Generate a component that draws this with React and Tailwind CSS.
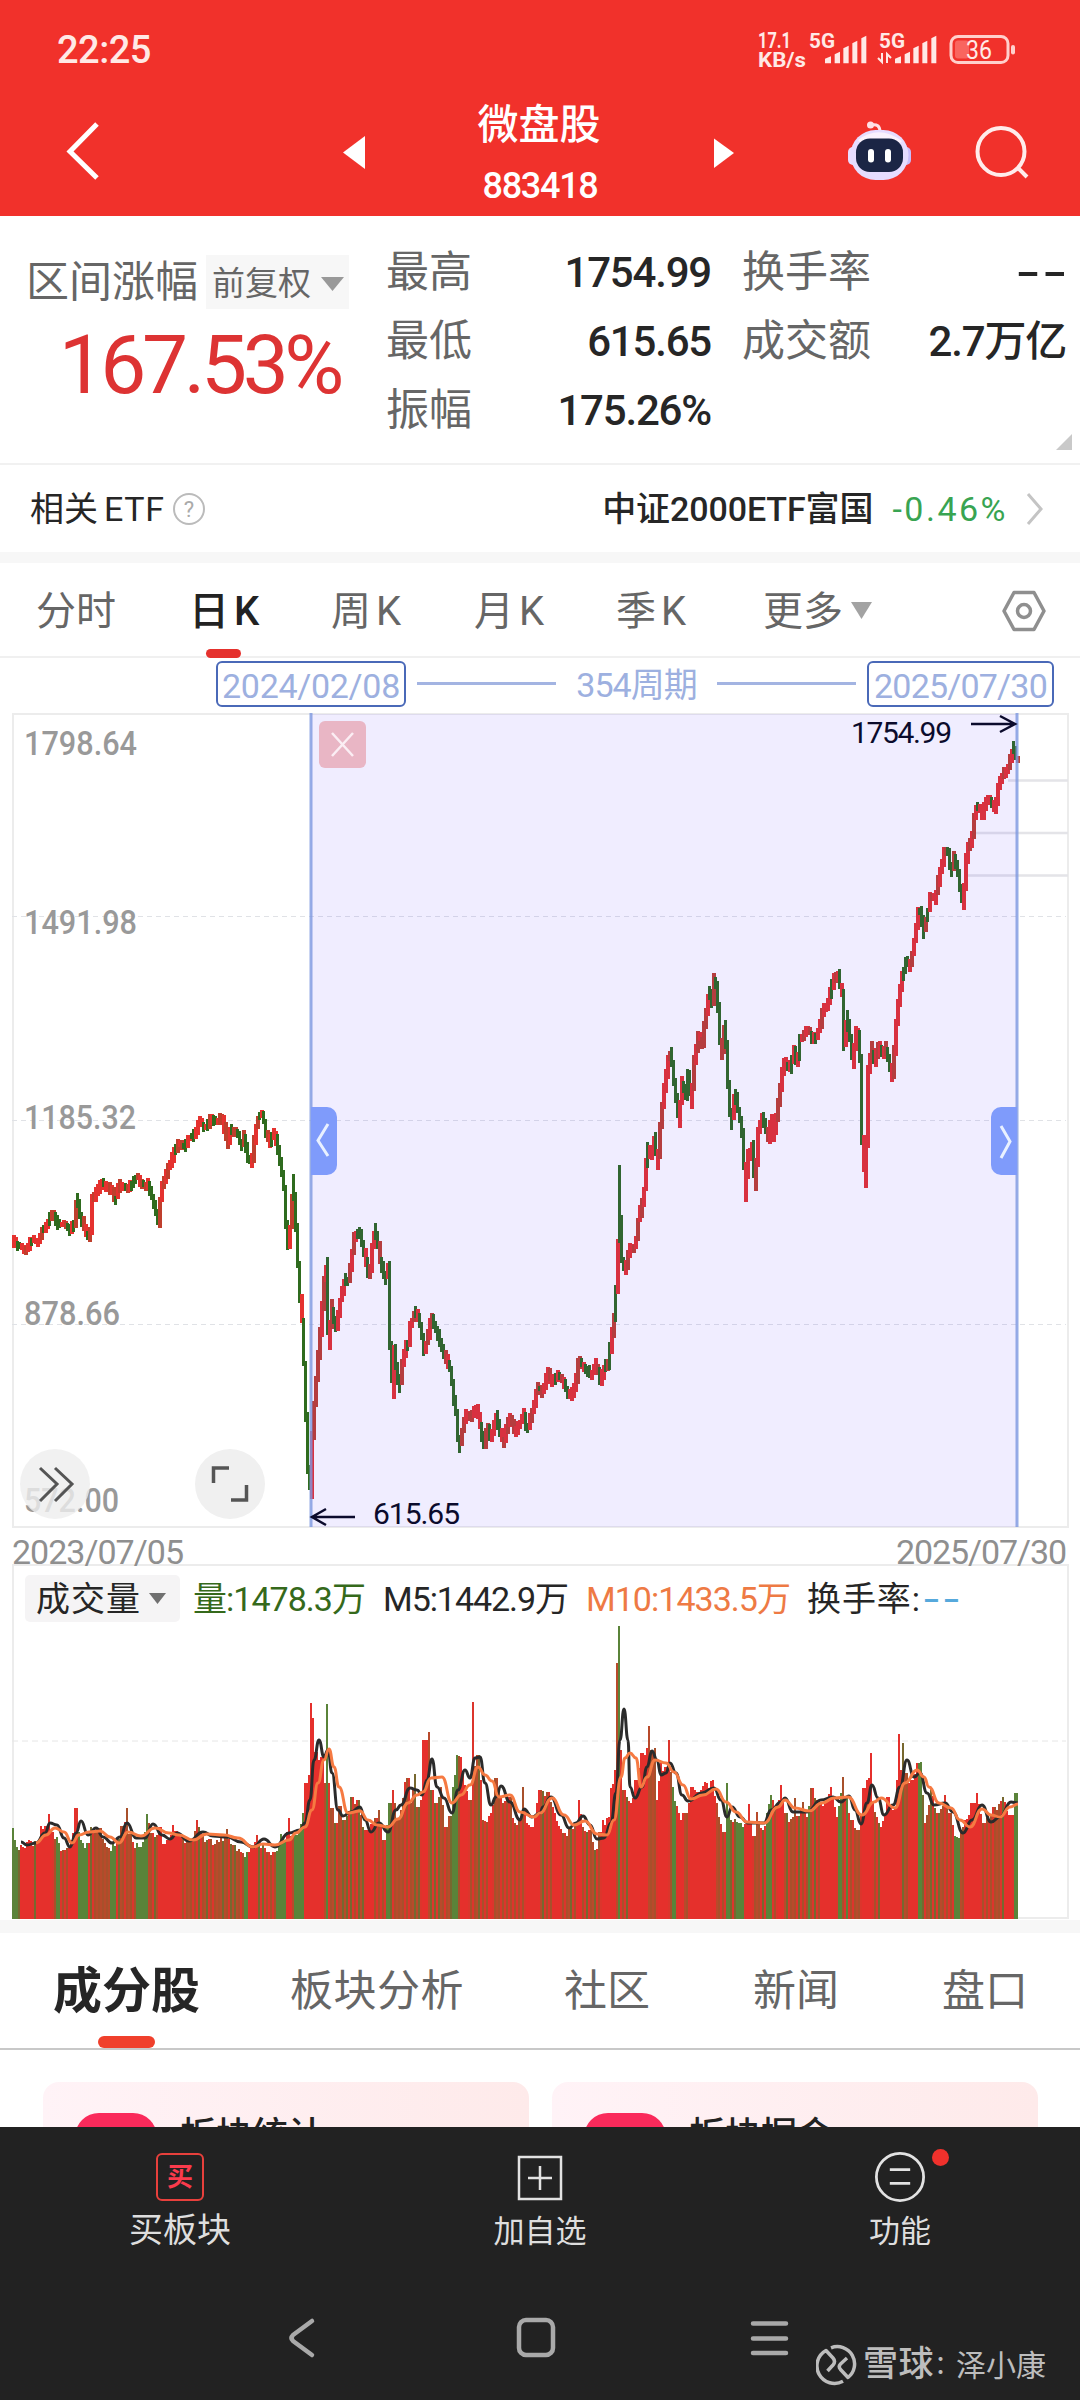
// src/App.jsx
import clsx from 'clsx';

const RED = '#e5322f';
const RUST = '#bf3f2d';
const GREEN = '#2f6b1e';

// k-line trace: x, y pairs in page pixels
const PRICE = [
  12, 1240, 19, 1246, 26, 1249, 33, 1239, 38, 1242, 41, 1232, 46, 1223, 53, 1214, 58, 1225, 65, 1223, 69, 1229, 74, 1222,
  76.5, 1198, 81, 1218, 87, 1238, 90, 1232, 92, 1199, 96, 1193, 100, 1182, 105, 1185, 112, 1190, 115, 1201, 119, 1184,
  126, 1186, 131, 1187, 137, 1175, 142, 1184, 148, 1184, 153, 1200, 158, 1223, 161, 1187, 167, 1171, 172, 1157, 179, 1143,
  185, 1147, 188, 1137, 195, 1134, 198, 1122, 207, 1127, 211, 1117, 215, 1122, 222, 1117, 227, 1143, 231, 1128, 238, 1133,
  241, 1147, 244, 1135, 247, 1153, 251, 1164, 257, 1118, 263, 1114, 266, 1133, 270, 1143, 274, 1132, 277, 1143, 281, 1166,
  284, 1187, 286, 1223, 287.5, 1248, 291, 1217, 293, 1178, 295, 1210, 297, 1243, 299, 1285, 302, 1320, 305, 1383,
  306, 1417, 307.5, 1467, 311, 1496, 312, 1433, 315, 1390, 318.5, 1350, 321, 1317, 324, 1280, 327, 1260, 327.5, 1326,
  329, 1343, 331, 1305, 336, 1327, 339, 1305, 344, 1280, 349, 1277, 351, 1257, 354, 1237, 359, 1229, 363, 1247, 367, 1268,
  369, 1276, 372, 1247, 375, 1227, 380, 1258, 385, 1279, 388, 1267, 389, 1337, 391, 1350, 392.5, 1392, 394, 1350,
  399, 1388, 401, 1370, 405, 1347, 408, 1343, 410, 1325, 415, 1311, 418, 1317, 421, 1330, 424, 1350, 429, 1330, 431.5, 1316,
  437, 1332, 442.5, 1349, 451, 1370, 453, 1393, 456, 1413, 459, 1450, 461, 1437, 465, 1412, 470, 1417, 475, 1406, 479, 1420,
  484, 1446, 487, 1426, 491, 1437, 496, 1416, 503, 1442, 509, 1418, 516, 1432, 523, 1413, 527, 1429, 534, 1402, 537, 1386,
  542, 1391, 548, 1372, 553, 1383, 558, 1374, 563, 1380, 569, 1397, 575, 1387, 578, 1361, 585, 1366, 591, 1375, 595, 1363,
  601, 1382, 603, 1367, 608, 1363, 611, 1340, 613, 1323, 615, 1310, 617, 1267, 618, 1240, 619, 1169, 620.7, 1257, 625, 1269,
  630, 1247, 635, 1247, 638, 1220, 643, 1197, 645, 1180, 647, 1147, 651, 1157, 655, 1134, 657, 1166, 660, 1126, 663, 1094,
  668, 1059, 670, 1052, 673, 1071, 679, 1122, 681, 1080, 687, 1096, 688, 1073, 691, 1103, 693, 1067, 698, 1035, 702, 1042,
  706, 1010, 709, 990, 712, 1002, 713, 977, 717, 986, 719, 1027, 721, 1055, 725, 1023, 727, 1067, 728, 1084, 731, 1124,
  735, 1091, 739, 1114, 743, 1137, 745, 1196, 747, 1157, 752, 1145, 755, 1189, 757, 1133, 762, 1114, 768, 1138, 771, 1117,
  773, 1136, 777, 1112, 780, 1088, 783, 1061, 791, 1067, 793, 1047, 797, 1063, 800, 1039, 808, 1028, 813, 1040, 818, 1031,
  823, 1010, 828, 1001, 833, 979, 838, 974, 842, 994, 844, 1044, 847, 1016, 850, 1038, 853, 1062, 855, 1030, 859, 1037,
  861, 1079, 862, 1139, 865, 1183, 867, 1100, 868, 1070, 871, 1047, 875, 1064, 877, 1044, 882, 1055, 885, 1046, 892, 1076,
  894, 1051, 895, 1035, 897, 1010, 899, 994, 902, 976, 906, 961, 909, 967, 912, 953, 915, 933, 918, 911, 921, 908, 923, 932,
  927, 916, 930, 897, 935, 899, 938, 880, 942, 863, 944, 852, 948, 852, 951, 873, 954, 856, 958, 871, 963, 907, 965, 863,
  968, 847, 972, 835, 973, 822, 977, 804, 982, 816, 985, 799, 992, 802, 995, 809, 998, 788, 1003, 773, 1007, 771, 1013, 746,
  1017, 761,
];

const VOLUME = [
  12, 1828, 15, 1840, 21, 1845, 29, 1840, 38, 1842, 41, 1826, 46, 1826, 49, 1814, 52, 1832, 57, 1837, 64, 1850, 71, 1840,
  76, 1808, 79, 1832, 83, 1843, 88, 1843, 90, 1827, 100, 1828, 107, 1847, 117, 1840, 122, 1826, 127, 1808, 130, 1834,
  133, 1842, 143, 1842, 147, 1814, 152, 1833, 160, 1827, 165, 1844, 173, 1825, 183, 1837, 191, 1842, 197, 1820, 203, 1836,
  217, 1840, 225, 1836, 227, 1829, 234, 1845, 248, 1852, 257, 1835, 263, 1845, 274, 1852, 281, 1834, 284, 1842, 289, 1818,
  292, 1836, 296, 1835, 303, 1813, 306, 1783, 309, 1775, 311, 1703, 313, 1718, 316, 1752, 318, 1760, 322, 1757, 325, 1783,
  327, 1704, 329, 1783, 332, 1808, 336, 1823, 340, 1806, 344, 1820, 352, 1797, 358, 1800, 365, 1830, 372, 1824, 379, 1810,
  384, 1840, 389, 1803, 393, 1790, 398, 1820, 405, 1782, 408, 1778, 410, 1803, 415, 1774, 418, 1807, 421, 1800, 424, 1740,
  429, 1732, 432, 1790, 436, 1803, 441, 1787, 446, 1827, 450, 1816, 453, 1787, 457, 1755, 461, 1757, 465, 1785, 470, 1800,
  473, 1702, 475, 1766, 478, 1755, 480, 1780, 483, 1820, 491, 1813, 496, 1778, 501, 1797, 510, 1797, 515, 1823, 520, 1820,
  523, 1787, 527, 1823, 532, 1827, 537, 1803, 540, 1790, 549, 1792, 555, 1813, 564, 1833, 571, 1827, 576, 1822, 579, 1800,
  583, 1827, 590, 1830, 595, 1850, 600, 1832, 603, 1820, 609, 1817, 611, 1788, 615, 1770, 617, 1663, 619, 1626, 621, 1750,
  624, 1790, 631, 1803, 636, 1780, 642, 1753, 647, 1748, 649, 1726, 651, 1750, 655, 1748, 657, 1800, 661, 1762, 666, 1767,
  669, 1740, 671, 1772, 673, 1787, 679, 1813, 686, 1813, 692, 1787, 698, 1792, 705, 1782, 713, 1780, 717, 1803, 724, 1832,
  727, 1783, 729, 1812, 740, 1823, 746, 1824, 749, 1804, 754, 1836, 757, 1812, 763, 1830, 771, 1795, 776, 1807, 781, 1785,
  786, 1813, 793, 1817, 795, 1798, 798, 1816, 803, 1802, 807, 1817, 812, 1788, 821, 1803, 831, 1787, 837, 1817, 843, 1777,
  846, 1797, 852, 1820, 858, 1830, 864, 1788, 867, 1780, 869, 1778, 871, 1753, 873, 1803, 881, 1827, 888, 1797, 895, 1807,
  897, 1780, 899, 1734, 901, 1770, 903, 1743, 906, 1773, 912, 1780, 917, 1763, 921, 1762, 925, 1823, 931, 1787, 938, 1813,
  945, 1795, 950, 1813, 957, 1837, 965, 1820, 972, 1803, 977, 1793, 984, 1823, 994, 1807, 1003, 1797, 1012, 1815, 1016, 1793,
];

const M5 = [
  21, 1842, 27, 1845, 36, 1843, 45, 1833, 50, 1823, 57, 1825, 64, 1838, 70, 1847, 76, 1833, 81, 1821, 88, 1835, 96, 1828,
  103, 1837, 112, 1843, 120, 1837, 127, 1823, 136, 1838, 145, 1838, 153, 1824, 162, 1835, 170, 1839, 177, 1833, 189, 1841,
  203, 1832, 213, 1836, 227, 1837, 241, 1842, 253, 1847, 264, 1839, 275, 1847, 289, 1833, 300, 1830, 305, 1823, 310, 1800,
  314, 1760, 319, 1740, 324, 1757, 328, 1750, 332, 1773, 338, 1810, 343, 1816, 351, 1812, 360, 1807, 365, 1820, 371, 1832,
  379, 1823, 388, 1832, 396, 1810, 401, 1805, 410, 1788, 417, 1790, 422, 1795, 427, 1780, 432, 1759, 437, 1787, 444, 1798,
  452, 1813, 458, 1790, 465, 1770, 470, 1778, 475, 1758, 480, 1757, 485, 1783, 491, 1805, 496, 1797, 501, 1786, 510, 1802,
  520, 1820, 524, 1809, 532, 1817, 540, 1813, 543, 1807, 551, 1797, 561, 1815, 569, 1828, 576, 1823, 583, 1816, 590, 1825,
  597, 1839, 604, 1838, 611, 1823, 616, 1793, 620, 1740, 624, 1709, 628, 1740, 630, 1787, 635, 1798, 642, 1787, 647, 1767,
  652, 1751, 657, 1760, 661, 1775, 666, 1773, 670, 1763, 676, 1773, 682, 1795, 688, 1801, 702, 1793, 714, 1788, 721, 1800,
  727, 1817, 732, 1807, 740, 1817, 748, 1823, 764, 1823, 771, 1810, 781, 1802, 785, 1798, 793, 1812, 807, 1812, 821, 1800,
  833, 1797, 841, 1802, 849, 1796, 855, 1810, 861, 1824, 867, 1803, 872, 1785, 878, 1798, 884, 1815, 893, 1805, 900, 1787,
  907, 1760, 914, 1777, 920, 1773, 927, 1793, 934, 1805, 945, 1803, 953, 1812, 963, 1833, 972, 1820, 982, 1805, 991, 1822,
  1000, 1817, 1011, 1802, 1018, 1803,
];

const M10 = [
  36, 1843, 46, 1835, 55, 1828, 64, 1832, 72, 1843, 79, 1835, 89, 1832, 100, 1831, 110, 1837, 119, 1843, 128, 1832,
  141, 1836, 155, 1828, 169, 1833, 179, 1835, 193, 1840, 207, 1834, 224, 1835, 238, 1838, 253, 1847, 263, 1844, 275, 1845,
  289, 1840, 296, 1833, 305, 1827, 312, 1810, 318, 1783, 324, 1760, 329, 1749, 334, 1767, 339, 1787, 348, 1813, 360, 1811,
  368, 1820, 377, 1825, 388, 1827, 398, 1819, 408, 1803, 417, 1795, 423, 1792, 431, 1778, 442, 1777, 452, 1803, 461, 1795,
  470, 1785, 478, 1767, 485, 1775, 492, 1781, 499, 1797, 510, 1795, 520, 1812, 534, 1817, 540, 1813, 552, 1798, 564, 1815,
  574, 1825, 585, 1821, 597, 1834, 607, 1835, 614, 1820, 621, 1777, 625, 1758, 630, 1753, 636, 1758, 641, 1787, 647, 1777,
  655, 1760, 666, 1763, 674, 1772, 683, 1785, 691, 1799, 703, 1795, 716, 1789, 726, 1802, 736, 1812, 747, 1822, 764, 1823,
  778, 1807, 785, 1800, 795, 1808, 809, 1811, 822, 1803, 834, 1798, 848, 1797, 862, 1815, 874, 1802, 881, 1798, 895, 1808,
  905, 1783, 917, 1770, 924, 1777, 929, 1787, 939, 1803, 951, 1808, 960, 1820, 970, 1827, 982, 1809, 991, 1815, 1000, 1817,
  1010, 1807, 1018, 1804,
];

// runs where the volume colour does not alternate
const GREEN_RUNS = [[12, 18], [56, 60], [78, 88], [110, 116], [136, 148], [245, 249], [277, 287], [294, 304], [387, 391], [452, 459], [672, 677], [727, 731], [737, 744], [767, 772], [808, 811], [839, 843], [846, 849], [919, 923], [954, 961], [1015, 1018]];
const RED_RUNS = [[21, 33], [37, 52], [69, 77], [158, 180], [249, 256], [287, 292], [305, 325], [366, 375], [423, 429], [460, 469], [489, 493], [527, 540], [552, 560], [577, 583], [602, 616], [630, 648], [658, 668], [679, 685], [690, 716], [746, 752], [778, 785], [820, 836], [862, 872], [880, 900], [911, 918], [965, 980], [1004, 1012]];

const rnd = n => {
  const v = Math.sin(n * 127.1 + 11.7) * 43758.5453;
  return v - Math.floor(v);
};

const toPairs = flat => {
  const out = [];
  for (let i = 0; i < flat.length; i += 2) out.push([flat[i], flat[i + 1]]);
  return out;
};

const at = (pts, x) => {
  for (let i = 1; i < pts.length; i++) {
    if (x <= pts[i][0]) {
      const [x0, y0] = pts[i - 1];
      const [x1, y1] = pts[i];
      return y0 + ((x - x0) / (x1 - x0)) * (y1 - y0);
    }
  }
  return pts[pts.length - 1][1];
};

const inRuns = (runs, x) => runs.some(([a, b]) => x >= a && x < b);

const smooth = flat => {
  const p = toPairs(flat);
  let d = `M${p[0][0]} ${p[0][1]}`;
  for (let i = 1; i < p.length; i++) {
    const mx = (p[i - 1][0] + p[i][0]) / 2;
    d += ` C${mx} ${p[i - 1][1]} ${mx} ${p[i][1]} ${p[i][0]} ${p[i][1]}`;
  }
  return d;
};

const pricePts = toPairs(PRICE);
const volPts = toPairs(VOLUME);

const candles = [];
const volumes = [];
for (let x = 13; x <= 1017; x += 2) {
  const a = at(pricePts, x - 1);
  const b = at(pricePts, x + 1);
  const ys = [a, b, ...pricePts.filter(p => Math.abs(p[0] - x) < 1).map(p => p[1])];
  const top = Math.min(...ys) - 1 - rnd(x) * 5;
  const bottom = Math.max(...ys) + 2 + rnd(x + 500) * 5;
  const slope = b - a;
  const up = x !== 619 && (slope > 5 ? rnd(x * 3) < 0.2 : slope < -4 ? rnd(x * 3) < 0.93 : rnd(x * 3) < 0.66);
  const red = rnd(x * 11) < 0.35 ? RUST : RED;
  candles.push({ x, top, h: bottom - top, up, fill: up ? red : GREEN });

  let vy = at(volPts, x);
  const near = volPts.find(p => Math.abs(p[0] - x) <= 1);
  if (near) vy = near[1];
  else vy += rnd(x * 7) * 7;
  let fill = '#e5302c';
  if (inRuns(GREEN_RUNS, x) || x === 619 || x === 327) fill = '#5a8339';
  else if (!inRuns(RED_RUNS, x)) {
    const k = (x - 13) / 2;
    if (k % 2) fill = rnd(x * 5) < 0.65 ? '#a8502b' : '#77682f';
    else fill = rnd(x * 5) < 0.75 ? '#dc352c' : '#b84a2b';
  }
  volumes.push({ x, y: vy, fill });
}

const SCALE = [
  ['1798.64', 755, 113],
  ['1491.98', 934, 113],
  ['1185.32', 1129, 112],
  ['878.66', 1325, 96],
  ['572.00', 1512, 95],
];

function StatusIcons() {
  const bars = [[0, 172, 18], [29, 158, 16], [55, 140, 16], [82, 125, 15], [109, 110, 15]];
  return (
    <svg viewBox="750 22 275 52" className="w-[275px] h-[52px]" fill="#ffe9e6">
      <g fontWeight="700" fontSize="21">
        <text x="758" y="48" fontSize="22" textLength="33" lengthAdjust="spacingAndGlyphs">17.1</text>
        <text x="758" y="66.500" textLength="48" lengthAdjust="spacingAndGlyphs">KB/s</text>
        <text x="809" y="48" textLength="26" lengthAdjust="spacingAndGlyphs">5G</text>
        <text x="879" y="48" textLength="26" lengthAdjust="spacingAndGlyphs">5G</text>
      </g>
      {[825, 895].map(ox =>
        bars.map(([dx, y, w]) => (
          <path
            key={`${ox}-${dx}`}
            d={`M${ox + dx / 3} ${y / 3 + 1.5}L${ox + (dx + w) / 3} ${y / 3 - 1}V63.300H${ox + dx / 3}z`}
          />
        ))
      )}
      <path d="M882 53v9l-4-4M887 63v-9l4 4" fill="none" stroke="#ffe9e6" strokeWidth="2" />
      <rect x="951" y="36.500" width="57" height="26" rx="7" fill="none" stroke="#ffd0cc" strokeWidth="3" />
      <rect x="955" y="40.500" width="14" height="18" rx="3" fill="#f9655f" />
      <rect x="1011" y="45" width="4" height="9.500" rx="2" fill="#ffd0cc" />
      <text x="966" y="58.500" fontSize="25" textLength="26" lengthAdjust="spacingAndGlyphs">36</text>
    </svg>
  );
}

function Robot() {
  return (
    <svg viewBox="846 120 68 62" className="w-[68px] h-[62px]">
      <path d="M871 125q9-2 9 7" fill="none" stroke="#ffdfe6" strokeWidth="3" />
      <circle cx="870.500" cy="125" r="3.500" fill="#ffdfe6" />
      <rect x="848" y="147" width="10" height="18" rx="5" fill="#eadcff" />
      <rect x="901" y="147" width="10" height="18" rx="5" fill="#c9bdfb" />
      <rect x="850.500" y="130" width="58" height="50" rx="25" fill="#e6dcff" />
      <path d="M858 140q21-16 44 1l-4 4h-36z" fill="#fbf2fd" />
      <rect x="856" y="138.500" width="47" height="33.500" rx="14" fill="#1b2545" />
      <rect x="868" y="149" width="6" height="13.500" rx="3" fill="#fff" />
      <rect x="885" y="149" width="6" height="13.500" rx="3" fill="#fff" />
    </svg>
  );
}

function Header() {
  return (
    <header className="h-[216px] bg-[#f1312b] text-white">
      <div className="h-[94px] pl-[57px] pt-[22px] flex">
        <span className="text-[38px] leading-[57px] font-medium tracking-[-0.5px] text-[#ffe9e6] w-[693px]">22:25</span>
        <StatusIcons />
      </div>
      <div className="h-[122px] flex">
        <svg viewBox="0 94 440 122" className="w-[440px] h-[122px]">
          <path d="M97 124L70 151.500L97 178" fill="none" stroke="#fff" strokeWidth="5" />
          <path d="M343 152.500L365 136V169z" fill="#fff" />
        </svg>
        <div className="w-[198px] mr-[2px] pt-px flex flex-col items-center">
          <h1 className="text-[41px] leading-[60px] font-medium">微盘股</h1>
          <span className="ml-[2px] text-[36px] leading-[62px] font-medium tracking-[-1.3px]">883418</span>
        </div>
        <svg viewBox="640 94 206 122" className="w-[206px] h-[122px]">
          <path d="M734 153L714 138.500V168z" fill="#fff" />
        </svg>
        <div className="pt-[26px]"><Robot /></div>
        <svg viewBox="914 94 166 122" className="w-[166px] h-[122px]" fill="none" stroke="#ffeceb" strokeWidth="4">
          <circle cx="1001" cy="151.500" r="23.500" />
          <path d="M1017 167L1027 177" />
        </svg>
      </div>
    </header>
  );
}

function Stat({ label, value }) {
  return (
    <div className="flex justify-between h-[69px] leading-[69px]">
      <span className="text-[43px] text-[#666]">{label}</span>
      <span className="text-[42px] font-medium tracking-[-1.2px] text-[#262626]">{value}</span>
    </div>
  );
}

function Stats() {
  return (
    <section className="relative h-[249px] border-b-2 border-[#f1f1f1] flex">
      <div className="w-[386px] pt-[37px] pl-[26px]">
        <div className="flex items-center h-[58px]">
          <span className="text-[43px] text-[#666]">区间涨幅</span>
          <div className="ml-[8px] h-[54px] w-[143px] bg-[#f7f7f7] flex items-center pl-[6px] pt-[4px] text-[33px] text-[#666]">
            前复权
            <svg viewBox="0 0 23 14" className="ml-[10px] w-[23px] h-[14px]"><path d="M0 0H23L11.500 14z" fill="#999" /></svg>
          </div>
        </div>
        <div className="w-[314px] text-right text-[82px] leading-[96px] tracking-[-4.4px] text-[#dd3333] mt-[6px]">167.53%</div>
      </div>
      <div className="w-[325px] pt-[22px]">
        <Stat label="最高" value="1754.99" />
        <Stat label="最低" value="615.65" />
        <Stat label="振幅" value="175.26%" />
      </div>
      <div className="w-[324px] ml-[31px] pt-[22px]">
        <div className="flex justify-between h-[69px] leading-[69px]">
          <span className="text-[43px] text-[#666]">换手率</span>
          <span className="text-[42px] font-medium tracking-[1.5px] scale-x-[1.7] mr-[7px] text-[#262626]">--</span>
        </div>
        <Stat label="成交额" value="2.7万亿" />
      </div>
      <svg viewBox="0 0 16 16" className="absolute right-[8px] bottom-[13px] w-4 h-4"><path d="M16 0V16H0z" fill="#c9c9c9" /></svg>
    </section>
  );
}

function EtfRow() {
  return (
    <section className="h-[87px] flex items-center pl-[30px] pr-[36px] pt-px text-[34px] text-[#262626]">
      <span>相关</span>
      <span className="ml-[6px] tracking-[0.6px]">ETF</span>
      <svg viewBox="0 0 34 34" className="ml-[7px] w-[34px] h-[34px]">
        <circle cx="17" cy="17" r="15" fill="none" stroke="#bbb" strokeWidth="2" />
        <text x="17" y="25" fontSize="22" textAnchor="middle" fill="#aaa">?</text>
      </svg>
      <span className="ml-auto font-medium tracking-[-0.1px]">中证2000ETF富国</span>
      <span className="ml-[19px] text-[#38a452] tracking-[2.5px]">-0.46%</span>
      <svg viewBox="0 0 18 32" className="ml-[18px] w-[18px] h-[32px]">
        <path d="M2 1L15 16L2 31" fill="none" stroke="#c4c4c4" strokeWidth="3" />
      </svg>
    </section>
  );
}

function PeriodTabs() {
  const tabs = [['分时', 'w-[153px]'], ['日K', 'w-[142px]'], ['周K', 'w-[143px]'], ['月K', 'w-[142px]'], ['季K', 'w-[147px]'], ['更多', 'w-[88px]']];
  return (
    <nav className="relative h-[95px] border-t-[11px] border-[#f7f7f7] box-content flex items-center pl-[36px] w-[1044px] text-[40px] text-[#666] shadow-[inset_0_-2px_0_#f0f0f0]">
      {tabs.map(([name, w], i) => (
        <button key={name} className={clsx('text-left pt-[3px]', w, i === 1 && 'text-[#222] font-medium')}>
          {name[1] === 'K' ? <>{name[0]}<span className="ml-[5px]">K</span></> : name}
        </button>
      ))}
      <svg viewBox="0 0 21 17" className="w-[21px] h-[17px]"><path d="M0 0H21L10.500 17z" fill="#a3a3a3" /></svg>
      <svg viewBox="0 0 46 46" className="ml-[129px] w-[46px] h-[46px]" fill="none" stroke="#8f8f8f" strokeWidth="3.500">
        <path d="M13 4.500H33L43 23L33 41.500H13L3 23z" strokeLinejoin="round" />
        <circle cx="23" cy="23" r="6.500" />
      </svg>
      <span className="absolute left-[206px] bottom-0 w-[35px] h-[9px] rounded-full bg-[#e5312d]" />
    </nav>
  );
}

function RangeBar() {
  return (
    <div className="h-[55px] flex items-center pl-[216px] pb-[4px] text-[34px] text-[#9db0e0]">
      <span className="w-[190px] h-[46px] border-2 border-[#4a69b8] rounded-md text-center leading-[46px] tracking-[-0.3px]">2024/02/08</span>
      <span className="w-[139px] h-[3px] bg-[#a3b4e2] ml-[11px]" />
      <span className="w-[161px] text-center tracking-[-1px] pt-[4px]">354周期</span>
      <span className="w-[139px] h-[3px] bg-[#a3b4e2]" />
      <span className="ml-[11px] w-[187px] h-[46px] border-2 border-[#4a69b8] rounded-md text-center leading-[46px] tracking-[-0.8px]">2025/07/30</span>
    </div>
  );
}

function PriceChart() {
  return (
    <svg viewBox="0 713 1080 851" className="relative block w-[1080px] h-[851px] overflow-visible">
      <rect x="13" y="714" width="1055" height="813" fill="none" stroke="#ececec" strokeWidth="2" />
      {[916.5, 1120.5, 1324.5].map(y => (
        <line key={y} x1="12" x2="1066" y1={y} y2={y} stroke="#e0e2e6" strokeDasharray="5 4" />
      ))}
      <path d="M1008 780.500H1068M976 833H1068M966 875.500H1068" stroke="#e4e4e8" strokeWidth="2.500" />
      <g fontSize="34" fontWeight="500" fill="#999">
        {SCALE.map(([t, y, w]) => (
          <text key={t} x="24" y={y} textLength={w} lengthAdjust="spacingAndGlyphs">{t}</text>
        ))}
      </g>
      <g shapeRendering="crispEdges">
        {candles.map(c => (
          <rect key={c.x} x={c.x - 1} y={c.top} width={c.up ? 3.5 : 2.5} height={c.h} fill={c.fill} />
        ))}
      </g>
      <rect x="311" y="714" width="706" height="813" fill="#5430ff" opacity="0.085" />
      <path d="M311 713V1527M1017 713V1527" stroke="#7d98e0" strokeWidth="3" opacity="0.8" />

      <rect x="319" y="721" width="47" height="47" rx="6" fill="#e9b6c5" />
      <path d="M332 733L353 756M353 733L332 756" stroke="#fbeef4" strokeWidth="2.500" />

      <path d="M311 1107h16a10 10 0 0 1 10 10v48a10 10 0 0 1-10 10h-16z" fill="#7f9bfb" />
      <path d="M328 1124L318 1140.500L328 1156" fill="none" stroke="#e9f1ff" strokeWidth="3" />
      <path d="M1017 1107h-16a10 10 0 0 0-10 10v48a10 10 0 0 0 10 10h16z" fill="#7f9bfb" />
      <path d="M1001 1126L1010 1141.500L1001 1158" fill="none" stroke="#e9f1ff" strokeWidth="3" />

      <g fill="none" stroke="#0b0b2c" strokeWidth="2.500">
        <path d="M971 724H1014M1000 716L1015 724L1000 732" />
        <path d="M355 1517H313M326 1509L312 1517L326 1525" />
      </g>
      <g fontSize="30" fill="#0b0b2c">
        <text x="851" y="743" textLength="101">1754.99</text>
        <text x="373" y="1524" textLength="87">615.65</text>
      </g>

      <g>
        <circle cx="55" cy="1484" r="35" fill="#ededed" opacity="0.8" />
        <path d="M40 1468L57 1484L40 1501M55 1468L72 1484L55 1501" fill="none" stroke="#555" strokeWidth="3" />
        <circle cx="230" cy="1484" r="35" fill="#f0f0f0" />
        <path d="M213.500 1483V1468H229M231 1500H246.500V1485" fill="none" stroke="#555" strokeWidth="3.500" />
      </g>
      <g fontSize="34" fill="#8f8f8f">
        <text x="12" y="1564" textLength="172">2023/07/05</text>
        <text x="896" y="1564" textLength="171">2025/07/30</text>
      </g>
    </svg>
  );
}

function VolumeChart() {
  return (
    <svg viewBox="0 1564 1080 356" className="block w-[1080px] h-[356px]">
      <rect x="13" y="1565" width="1055" height="353" fill="none" stroke="#ececec" strokeWidth="2" />
      <line x1="12" x2="1066" y1="1741" y2="1741" stroke="#e6e6e6" strokeDasharray="6 4" />
      <rect x="25" y="1575" width="155" height="47" rx="5" fill="#f5f4f5" />
      <g fontSize="34" fill="#262626">
        <text x="36" y="1610.500" textLength="104">成交量</text>
        <path d="M149 1593H166L157.500 1604z" fill="#707070" />
        <text x="193" y="1610.500" textLength="173" fill="#35691b">量:1478.3万</text>
        <text x="383" y="1610.500" textLength="186">M5:1442.9万</text>
        <text x="586" y="1610.500" textLength="205" fill="#ee7a44">M10:1433.5万</text>
        <text x="807" y="1610.500" textLength="113">换手率:</text>
        <text x="923" y="1610.500" letterSpacing="2" textLength="40" lengthAdjust="spacingAndGlyphs" fill="#56a9dc" fontWeight="500">--</text>
      </g>
      <g shapeRendering="crispEdges">
        {volumes.map(v => (
          <rect key={v.x} x={v.x - 1} y={v.y} width="2" height={1919 - v.y} fill={v.fill} />
        ))}
      </g>
      <path d={smooth(M5)} fill="none" stroke="#2b2b2b" strokeWidth="3" />
      <path d={smooth(M10)} fill="none" stroke="#f67a42" strokeWidth="3" />
    </svg>
  );
}

function SectionTabs() {
  return (
    <nav className="relative h-[130px] border-t-[13px] border-t-[#f7f7f7] border-b-2 border-b-[#c8c8c8] flex text-[43px] leading-[117px] text-[#666]">
      <span className="ml-[53px] w-[237px] text-[49px] font-bold text-[#262626]">成分股</span>
      <span className="w-[274px] tracking-[0.5px]">板块分析</span>
      <span className="w-[189px]">社区</span>
      <span className="w-[189px]">新闻</span>
      <span>盘口</span>
      <span className="absolute left-[98px] bottom-0 w-[57px] h-[12px] rounded-full bg-[#f0402c]" />
    </nav>
  );
}

function Card({ title }) {
  return (
    <div className="w-[486px] h-[120px] rounded-2xl bg-gradient-to-r from-[#fff3f7] to-[#feeaea] flex pl-[32px] pt-[31px]">
      <span className="w-[82px] h-[80px] rounded-[24px] bg-[#fa2a5b]" />
      <span className="ml-[23px] text-[36px] leading-[46px] font-medium text-[#222]">{title}</span>
    </div>
  );
}

function ActionBar() {
  return (
    <div className="h-[148px] grid grid-cols-3 text-[#dedede] pt-[24px]">
      <div className="flex flex-col items-center">
        <span className="mt-[2px] w-[48px] h-[48px] border-2 border-[#e8403c] rounded-md flex items-center justify-center text-[26px] font-bold text-[#fb3b4c]">买</span>
        <span className="text-[34px] leading-[58px]">买板块</span>
      </div>
      <div className="flex flex-col items-center">
        <svg viewBox="0 0 50 50" className="w-[50px] h-[50px]" fill="none" stroke="#e2e2e2" strokeWidth="2.500">
          <rect x="4" y="6" width="42" height="42" />
          <path d="M25 15V39M13 27H37" />
        </svg>
        <span className="text-[31px] leading-[62px]">加自选</span>
      </div>
      <div className="relative flex flex-col items-center">
        <svg viewBox="0 0 54 54" className="w-[54px] h-[50px] overflow-visible" fill="none" stroke="#e2e2e2" strokeWidth="3">
          <circle cx="27" cy="28" r="25.500" />
          <path d="M16 20H38M16 35H38" />
        </svg>
        <span className="absolute left-[212px] top-[-2px] w-[17px] h-[17px] rounded-full bg-[#f0312c]" />
        <span className="text-[31px] leading-[62px]">功能</span>
      </div>
    </div>
  );
}

function SystemNav() {
  return (
    <div className="h-[125px] flex">
      <svg viewBox="0 2275 816 125" className="w-[816px] h-[125px]" fill="none" stroke="#a9a9a9" strokeWidth="4.500" strokeLinecap="round">
        <path d="M312 2321L293 2335Q290 2338 293 2341L312 2355" strokeLinejoin="round" />
        <rect x="519" y="2320" width="34" height="35" rx="7" />
        <path d="M753 2323.500H786M753 2338.500H786M753 2353H786" />
      </svg>
      <div className="mt-[67px] h-[46px] flex items-center text-[#bdbdbd]">
        <svg viewBox="-2 -1 42 42" className="w-[42px] h-[42px]" fill="none" stroke="#bdbdbd" strokeWidth="3.500" strokeLinejoin="round">
          <path d="M13 2.800A17.300 17.300 0 0 1 30 32.500L22.500 24.500Q20 21.500 22.500 19L29 13" />
          <path d="M25 36.200A17.300 17.300 0 0 1 8 5.500L15 13Q18 16.500 15 20L9.500 26" />
        </svg>
        <span className="ml-[5px] text-[35px] font-medium tracking-[0.5px]">雪球</span>
        <span className="text-[26px] w-[22px]">：</span>
        <span className="text-[30px]">泽小康</span>
      </div>
    </div>
  );
}

export default function App() {
  return (
    <div className="w-[1080px] h-[2400px] overflow-hidden bg-white font-['Roboto','Noto_Sans_CJK_SC',sans-serif]">
      <Header />
      <Stats />
      <EtfRow />
      <PeriodTabs />
      <RangeBar />
      <PriceChart />
      <VolumeChart />
      <SectionTabs />
      <div className="h-[77px] overflow-hidden flex gap-[23px] pl-[43px] pt-[32px]">
        <Card title="板块统计" />
        <Card title="板块掘金" />
      </div>
      <footer className="h-[273px] bg-[#222]">
        <ActionBar />
        <SystemNav />
      </footer>
    </div>
  );
}
